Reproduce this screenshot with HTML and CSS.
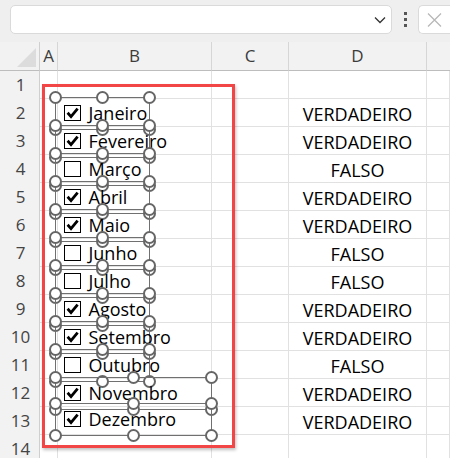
FILE: index.html
```html
<!DOCTYPE html>
<html lang="pt">
<head>
<meta charset="utf-8">
<title>Caixas de seleção</title>
<link rel="stylesheet" href="styles.css">
</head>
<body>
<div class="app">
  <div class="toolbar">
    <div class="namebox">
      <svg class="chev" width="12" height="8" viewBox="0 0 12 8"><polyline points="1,1.5 6,6.5 11,1.5" fill="none" stroke="#333" stroke-width="1.3"/></svg>
    </div>
    <div class="dots"><span></span><span></span><span></span></div>
    <div class="xbox">
      <svg width="15" height="14" viewBox="0 0 15 14"><path d="M1 0.5 L14 13.5 M14 0.5 L1 13.5" stroke="#b8b8b8" stroke-width="1.3" fill="none"/></svg>
    </div>
  </div>
  <div class="sheet">
    <div class="grid">
      <div class="hd corner"><span class="tri"></span></div>
      <div class="hd col">A</div>
      <div class="hd col">B</div>
      <div class="hd col">C</div>
      <div class="hd col">D</div>
      <div class="hd col last"></div>

      <div class="rh">1</div><div class="c"></div><div class="c"></div><div class="c"></div><div class="c"></div><div class="c"></div>
      <div class="rh">2</div><div class="c"></div><div class="c"></div><div class="c"></div><div class="c v">VERDADEIRO</div><div class="c"></div>
      <div class="rh">3</div><div class="c"></div><div class="c"></div><div class="c"></div><div class="c v">VERDADEIRO</div><div class="c"></div>
      <div class="rh">4</div><div class="c"></div><div class="c"></div><div class="c"></div><div class="c v">FALSO</div><div class="c"></div>
      <div class="rh">5</div><div class="c"></div><div class="c"></div><div class="c"></div><div class="c v">VERDADEIRO</div><div class="c"></div>
      <div class="rh">6</div><div class="c"></div><div class="c"></div><div class="c"></div><div class="c v">VERDADEIRO</div><div class="c"></div>
      <div class="rh">7</div><div class="c"></div><div class="c"></div><div class="c"></div><div class="c v">FALSO</div><div class="c"></div>
      <div class="rh">8</div><div class="c"></div><div class="c"></div><div class="c"></div><div class="c v">FALSO</div><div class="c"></div>
      <div class="rh">9</div><div class="c"></div><div class="c"></div><div class="c"></div><div class="c v">VERDADEIRO</div><div class="c"></div>
      <div class="rh">10</div><div class="c"></div><div class="c"></div><div class="c"></div><div class="c v">VERDADEIRO</div><div class="c"></div>
      <div class="rh">11</div><div class="c"></div><div class="c"></div><div class="c"></div><div class="c v">FALSO</div><div class="c"></div>
      <div class="rh">12</div><div class="c"></div><div class="c"></div><div class="c"></div><div class="c v">VERDADEIRO</div><div class="c"></div>
      <div class="rh">13</div><div class="c"></div><div class="c"></div><div class="c"></div><div class="c v">VERDADEIRO</div><div class="c"></div>
      <div class="rh">14</div><div class="c"></div><div class="c"></div><div class="c"></div><div class="c"></div><div class="c"></div>
    </div>

    <div class="selection"></div>

    <div class="controls">
      <div class="ctl"><span class="box on"><svg viewBox="0 0 15 14"><path d="M2.6 6.8 L6 10.6 L12.6 2.6"/></svg></span><span class="lbl">Janeiro</span><i class="h tl"></i><i class="h tm"></i><i class="h tr"></i><i class="h bl"></i><i class="h bm"></i><i class="h br"></i></div>
      <div class="ctl"><span class="box on"><svg viewBox="0 0 15 14"><path d="M2.6 6.8 L6 10.6 L12.6 2.6"/></svg></span><span class="lbl">Fevereiro</span><i class="h tl"></i><i class="h tm"></i><i class="h tr"></i><i class="h bl"></i><i class="h bm"></i><i class="h br"></i></div>
      <div class="ctl"><span class="box"></span><span class="lbl">Março</span><i class="h tl"></i><i class="h tm"></i><i class="h tr"></i><i class="h bl"></i><i class="h bm"></i><i class="h br"></i></div>
      <div class="ctl"><span class="box on"><svg viewBox="0 0 15 14"><path d="M2.6 6.8 L6 10.6 L12.6 2.6"/></svg></span><span class="lbl">Abril</span><i class="h tl"></i><i class="h tm"></i><i class="h tr"></i><i class="h bl"></i><i class="h bm"></i><i class="h br"></i></div>
      <div class="ctl"><span class="box on"><svg viewBox="0 0 15 14"><path d="M2.6 6.8 L6 10.6 L12.6 2.6"/></svg></span><span class="lbl">Maio</span><i class="h tl"></i><i class="h tm"></i><i class="h tr"></i><i class="h bl"></i><i class="h bm"></i><i class="h br"></i></div>
      <div class="ctl"><span class="box"></span><span class="lbl">Junho</span><i class="h tl"></i><i class="h tm"></i><i class="h tr"></i><i class="h bl"></i><i class="h bm"></i><i class="h br"></i></div>
      <div class="ctl"><span class="box"></span><span class="lbl">Julho</span><i class="h tl"></i><i class="h tm"></i><i class="h tr"></i><i class="h bl"></i><i class="h bm"></i><i class="h br"></i></div>
      <div class="ctl"><span class="box on"><svg viewBox="0 0 15 14"><path d="M2.6 6.8 L6 10.6 L12.6 2.6"/></svg></span><span class="lbl">Agosto</span><i class="h tl"></i><i class="h tm"></i><i class="h tr"></i><i class="h bl"></i><i class="h bm"></i><i class="h br"></i></div>
      <div class="ctl"><span class="box on"><svg viewBox="0 0 15 14"><path d="M2.6 6.8 L6 10.6 L12.6 2.6"/></svg></span><span class="lbl">Setembro</span><i class="h tl"></i><i class="h tm"></i><i class="h tr"></i><i class="h bl"></i><i class="h bm"></i><i class="h br"></i></div>
      <div class="ctl"><span class="box"></span><span class="lbl">Outubro</span><i class="h tl"></i><i class="h tm"></i><i class="h tr"></i><i class="h bl"></i><i class="h bm"></i><i class="h br"></i></div>
      <div class="ctl wide"><span class="box on"><svg viewBox="0 0 15 14"><path d="M2.6 6.8 L6 10.6 L12.6 2.6"/></svg></span><span class="lbl">Novembro</span><i class="h tl"></i><i class="h tm"></i><i class="h tr"></i><i class="h bl"></i><i class="h bm"></i><i class="h br"></i></div>
      <div class="ctl wide last"><span class="box on"><svg viewBox="0 0 15 14"><path d="M2.6 6.8 L6 10.6 L12.6 2.6"/></svg></span><span class="lbl">Dezembro</span><i class="h tl"></i><i class="h tm"></i><i class="h tr"></i><i class="h bl"></i><i class="h bm"></i><i class="h br"></i></div>
    </div>
  </div>
</div>
</body>
</html>
```

FILE: styles.css
```css
html, body {
  margin: 0;
  padding: 0;
  width: 450px;
  height: 458px;
  overflow: hidden;
  background: #ffffff;
  font-family: "Open Sans", "Noto Sans", sans-serif;
}

.app {
  width: 450px;
  height: 458px;
  overflow: hidden;
}

/* ---------- toolbar ---------- */
.toolbar {
  height: 42px;
  box-sizing: border-box;
  background: #efefef;
  display: flex;
  align-items: flex-start;
  padding: 5px 0 0 10px;
}

.namebox {
  width: 382px;
  height: 29px;
  box-sizing: border-box;
  background: #ffffff;
  border: 1px solid #dadada;
  border-radius: 5px;
  display: flex;
  align-items: center;
  justify-content: flex-end;
  padding-right: 5px;
}

.chev {
  display: block;
  margin-top: 1px;
}

.dots {
  width: 26px;
  height: 29px;
  display: flex;
  flex-direction: column;
  align-items: center;
  justify-content: center;
  gap: 3px;
}

.dots span {
  display: block;
  width: 3px;
  height: 3px;
  background: #555555;
}

.xbox {
  flex: 1;
  height: 29px;
  box-sizing: border-box;
  background: #ffffff;
  border: 1px solid #dadada;
  border-right: none;
  border-radius: 5px 0 0 5px;
  display: flex;
  align-items: center;
  padding-left: 8px;
}

.xbox svg {
  display: block;
}

/* ---------- sheet ---------- */
.sheet {
  position: relative;
}

.grid {
  display: grid;
  grid-template-columns: 40px 18px 154px 77px 138px 23px;
  grid-template-rows: 29px repeat(14, 28px);
}

.hd {
  background: #f2f2f2;
  border-right: 1px solid #d6d6d6;
  border-bottom: 1px solid #bdbdbd;
  box-sizing: border-box;
  color: #3c3c3c;
  font-size: 17px;
  line-height: 28px;
  text-align: center;
}

.hd.last {
  border-right: none;
}

.corner {
  position: relative;
  border-right-color: #cfcfcf;
}

.tri {
  position: absolute;
  right: 3px;
  bottom: 3px;
  width: 0;
  height: 0;
  border-style: solid;
  border-width: 0 0 19px 19px;
  border-color: transparent transparent #dcdcdc transparent;
}

.rh {
  background: #f2f2f2;
  border-right: 1px solid #cfcfcf;
  box-sizing: border-box;
  color: #444444;
  font-size: 17px;
  line-height: 28px;
  text-align: center;
  padding-left: 2px;
}

.c {
  background: #ffffff;
  border-right: 1px solid #e1e1e1;
  border-bottom: 1px solid #e1e1e1;
  box-sizing: border-box;
  color: #000000;
  font-size: 18px;
  line-height: 28px;
  text-align: center;
  white-space: nowrap;
}

.c.v {
  padding-top: 1px;
}

/* ---------- selection rectangle ---------- */
.selection {
  position: absolute;
  left: 42px;
  top: 42px;
  width: 193px;
  height: 364px;
  box-sizing: border-box;
  border: 3px solid #f24646;
  box-shadow: 1px 2px 3px rgba(0, 0, 0, 0.25);
}

/* ---------- form controls ---------- */
.controls {
  position: absolute;
  left: 55px;
  top: 55px;
  display: flex;
  flex-direction: column;
  align-items: flex-start;
}

.ctl {
  position: relative;
  width: 95px;
  height: 33px;
  box-sizing: border-box;
  border: 1.5px solid #707070;
  margin-bottom: -5px;
  display: flex;
  align-items: flex-start;
  padding: 7px 0 0 7.5px;
  gap: 8px;
}

.ctl.wide {
  width: 157px;
}

.ctl.last {
  margin-top: -2px;
}

.box {
  width: 17px;
  height: 16px;
  box-sizing: border-box;
  border: 1px solid #000000;
  background: #ffffff;
  flex: none;
  display: flex;
  align-items: center;
  justify-content: center;
}

.box svg {
  width: 15px;
  height: 14px;
  display: block;
}

.box svg path {
  fill: none;
  stroke: #000000;
  stroke-width: 2.8;
  stroke-linejoin: miter;
}

.lbl {
  font-size: 18px;
  line-height: 28px;
  margin-top: -6px;
  color: #000000;
  white-space: nowrap;
}

.h {
  position: absolute;
  width: 13px;
  height: 13px;
  box-sizing: border-box;
  border: 2.5px solid #666666;
  border-radius: 50%;
  background: #ffffff;
}

.h.tl { left: -7.25px; top: -7.25px; }
.h.tm { left: calc(50% - 6.5px); top: -7.25px; }
.h.tr { right: -7.25px; top: -7.25px; }
.h.bl { left: -7.25px; bottom: -7.25px; }
.h.bm { left: calc(50% - 6.5px); bottom: -7.25px; }
.h.br { right: -7.25px; bottom: -7.25px; }
```
